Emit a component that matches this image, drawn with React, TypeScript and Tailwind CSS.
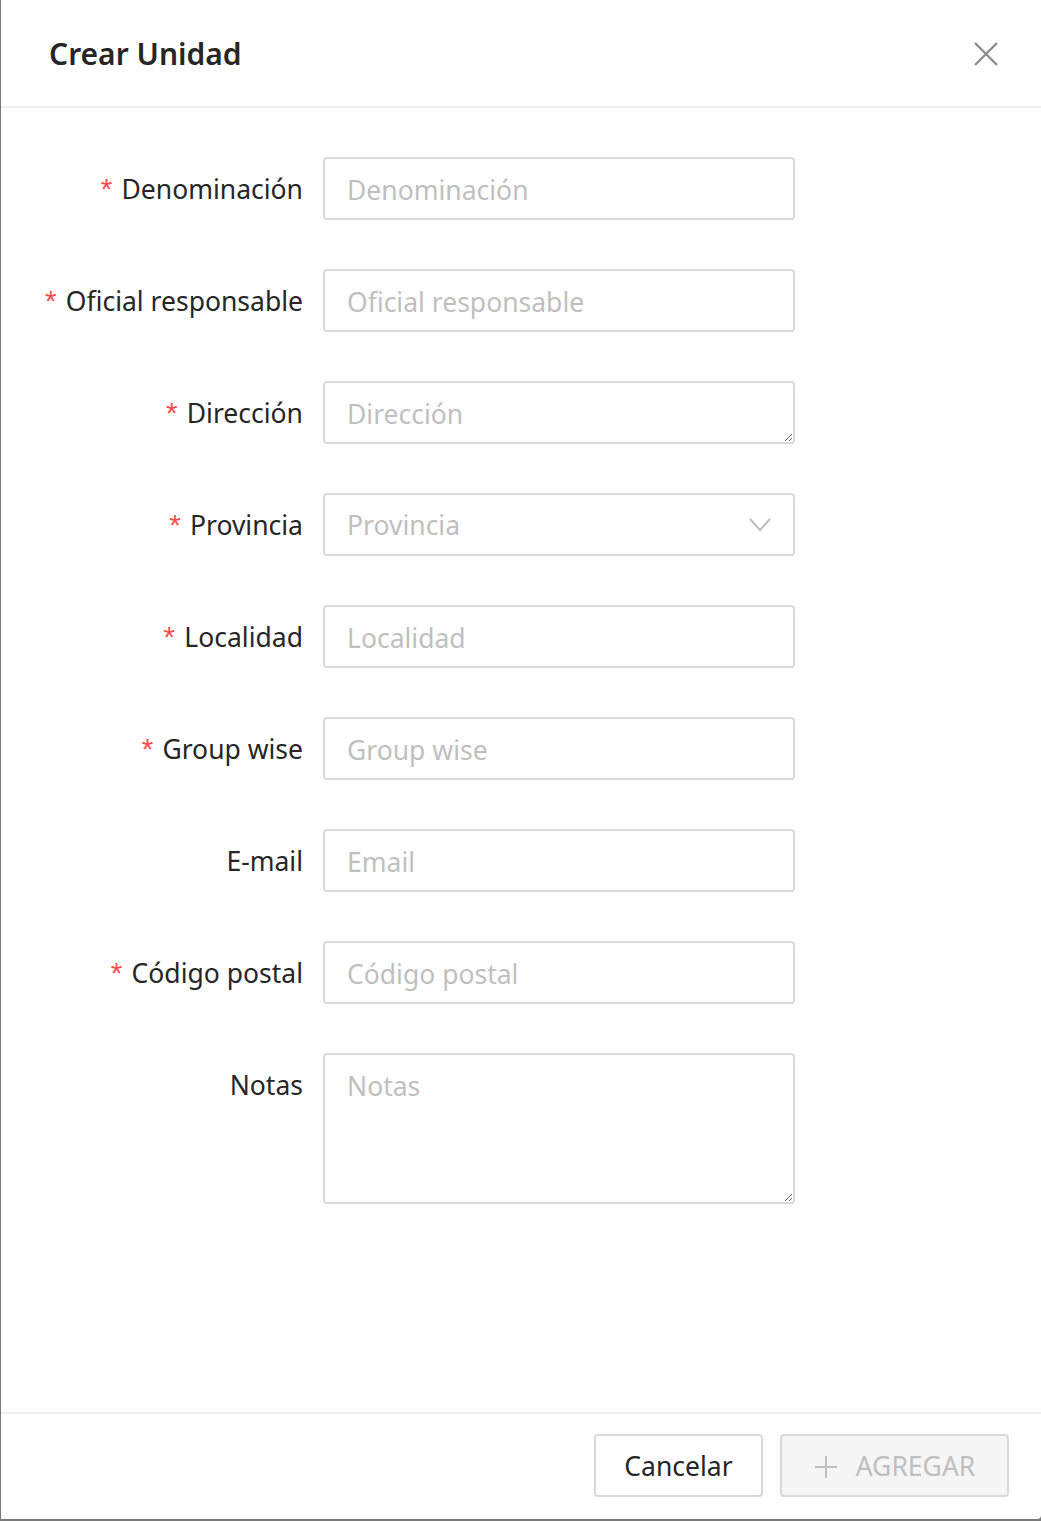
import React from 'react';

type Field = {
  label: string;
  placeholder: string;
  required?: boolean;
  kind?: 'input' | 'textarea' | 'select' | 'notes';
};

const fields: Field[] = [
  { label: 'Denominación', placeholder: 'Denominación', required: true },
  { label: 'Oficial responsable', placeholder: 'Oficial responsable', required: true },
  { label: 'Dirección', placeholder: 'Dirección', required: true, kind: 'textarea' },
  { label: 'Provincia', placeholder: 'Provincia', required: true, kind: 'select' },
  { label: 'Localidad', placeholder: 'Localidad', required: true },
  { label: 'Group wise', placeholder: 'Group wise', required: true },
  { label: 'E-mail', placeholder: 'Email' },
  { label: 'Código postal', placeholder: 'Código postal', required: true },
  { label: 'Notas', placeholder: 'Notas', kind: 'notes' },
];

const font = { fontFamily: '"Noto Sans", "Open Sans", Arial, sans-serif' };

const FieldControl: React.FC<{ field: Field }> = ({ field }) => {
  const base =
    'w-[472px] border-2 border-[#d9d9d9] rounded-[4px] bg-white px-[22px] text-[26.5px] text-[#262626] placeholder:text-[#bfbfbf] outline-none';

  if (field.kind === 'select') {
    return (
      <div className={`${base} h-[63px] flex items-center justify-between`}>
        <span className="text-[#bfbfbf] pt-[2px]">{field.placeholder}</span>
        <svg width="22" height="16" viewBox="0 0 22 16">
          <path d="M1 2 L11 13 L21 2" fill="none" stroke="#bfbfbf" strokeWidth="2" />
        </svg>
      </div>
    );
  }
  if (field.kind === 'textarea') {
    return <textarea className={`${base} h-[63px] pt-[11px] pb-[9px] resize-y leading-[40px] block`} placeholder={field.placeholder} style={font} />;
  }
  if (field.kind === 'notes') {
    return <textarea className={`${base} h-[151px] pt-[11px] pb-[9px] resize-y leading-[40px] block`} placeholder={field.placeholder} style={font} />;
  }
  return <input className={`${base} h-[63px] pt-[2px] block`} placeholder={field.placeholder} style={font} />;
};

export default function App() {
  return (
    <div className="w-[1041px] h-[1521px] bg-[#7a7a7a] pl-[1px] pb-[2px]" style={font}>
      <div className="h-full bg-white rounded-br-[4px] flex flex-col">
        <div className="h-[108px] shrink-0 border-b-2 border-[#f0f0f0] flex items-center justify-between pl-[48px] pr-[43px]">
          <h1 className="text-[30px] font-semibold text-[#262626]">Crear Unidad</h1>
          <svg width="24" height="24" viewBox="0 0 24 24" className="mt-[2px]">
            <path d="M1 1 L23 23 M23 1 L1 23" stroke="#8c8c8c" strokeWidth="2.4" fill="none" />
          </svg>
        </div>

        <div className="flex-1 pt-[49px] flex flex-col gap-[49px]">
          {fields.map((f) => (
            <div key={f.label} className="flex items-start">
              <label className="w-[322px] shrink-0 pr-[20px] pt-[3px] h-[63px] flex items-center justify-end text-[26.5px] text-[#262626] whitespace-nowrap">
                {f.required && (
                  <span
                    className="text-[#ff4d4f] text-[30px] mr-[6px] leading-none mt-[6px]"
                    style={{ fontFamily: '"Liberation Mono", monospace' }}
                  >
                    *
                  </span>
                )}
                {f.label}
              </label>
              <FieldControl field={f} />
            </div>
          ))}
        </div>

        <div className="h-[107px] shrink-0 border-t-2 border-[#f0f0f0] flex items-start justify-end gap-[17px] pt-[20px] pr-[32px]">
          <button className="w-[169px] h-[63px] pt-[3px] border-2 border-[#d9d9d9] rounded-[4px] bg-white text-[26.5px] text-[#262626]">
            Cancelar
          </button>
          <button
            disabled
            className="w-[229px] h-[63px] pt-[3px] border-2 border-[#d9d9d9] rounded-[4px] bg-[#f5f5f5] text-[26.5px] text-[#bfbfbf] flex items-center justify-center gap-[18px]"
          >
            <svg width="24" height="24" viewBox="0 0 24 24">
              <path d="M12 1 V23 M1 12 H23" stroke="#bfbfbf" strokeWidth="2" fill="none" />
            </svg>
            AGREGAR
          </button>
        </div>
      </div>
    </div>
  );
}
